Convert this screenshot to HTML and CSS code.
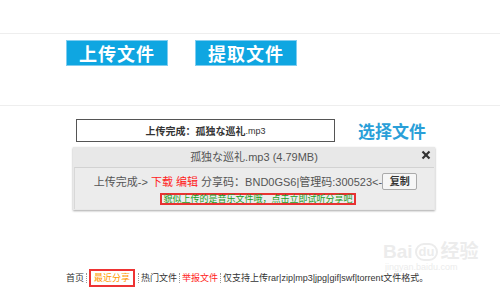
FILE: index.html
```html
<!DOCTYPE html>
<html lang="zh-CN">
<head>
    <meta charset="UTF-8">
    <title>文件分享</title>
    <link rel="stylesheet" href="styles.css">
</head>
<body>
<div class="topbar"></div>
<div class="nav">
    <a class="navbtn" href="#">上传文件</a>
    <a class="navbtn" href="#">提取文件</a>
</div>
<div class="upload_row">
    <div class="filebox">上传完成：孤独な巡礼<span class="ext">.mp3</span></div>
    <a class="choose" href="#">选择文件</a>
</div>
<div class="dialog">
    <div class="dialog_title">
        孤独な巡礼.mp3 (4.79MB)
        <svg class="close" viewBox="0 0 10 10">
            <path d="M1.5,1.5L8.5,8.5"></path>
            <path d="M8.5,1.5L1.5,8.5"></path>
        </svg>
    </div>
    <div class="dialog_body">
        <div class="result">
            上传完成-&gt;&nbsp;<span class="red">下载</span>&nbsp;<span class="red">编辑</span>&nbsp;分享码：BND0GS6|管理码:300523&lt;-<button class="copy">复制</button>
        </div>
        <div class="tip">貌似上传的是音乐文件哦，点击立即试听分享吧</div>
    </div>
</div>
<div class="footer">
    <a href="#">首页</a>
    <span class="sep"></span>
    <a class="recent" href="#">最近分享</a>
    <span class="sep"></span>
    <a href="#">热门文件</a>
    <span class="sep"></span>
    <a class="report" href="#">举报文件</a>
    <span class="sep"></span>
    <span>仅支持上传rar|zip|mp3|jpg|gif|swf|torrent文件格式。</span>
</div>
<div class="watermark">
    <div class="wm_logo">Bai<span class="wm_paw">du</span>经验</div>
    <div class="wm_url">jingyan.baidu.com</div>
</div>
</body>
</html>
```
FILE: styles.css
```css
body{
    margin: 0;
    background: #fff;
    font-family: "Liberation Sans", "Noto Sans CJK SC", sans-serif;
    color: #333;
    position: relative;
    height: 287px;
    overflow: hidden;
}
a{
    text-decoration: none;
    color: inherit;
}
.topbar{
    height: 33px;
    border-bottom: 1px solid #eee;
}
.nav{
    display: flex;
    gap: 27px;
    box-sizing: border-box;
    height: 72px;
    padding: 6px 0 0 66px;
    border-bottom: 1px solid #eee;
}
.navbtn{
    display: flex;
    justify-content: center;
    align-items: center;
    width: 102px;
    height: 26px;
    box-sizing: border-box;
    background: #0fa6e1;
    border: 1px solid #7fcdf0;
    color: #fff;
    font-weight: bold;
    font-size: 18px;
    letter-spacing: 1px;
}
.upload_row{
    display: flex;
    align-items: center;
    gap: 23px;
    padding: 12px 0 0 76px;
}
.filebox{
    width: 259px;
    height: 23px;
    box-sizing: border-box;
    border: 1px solid #555;
    display: flex;
    justify-content: center;
    align-items: center;
    font-size: 10px;
    font-weight: bold;
    color: #333;
}
.filebox .ext{
    font-weight: normal;
    font-size: 9px;
}
.choose{
    color: #2a9fd8;
    font-weight: bold;
    font-size: 17px;
}
.dialog{
    width: 362px;
    height: 63px;
    margin: 4px 0 0 73px;
    background: #e8e8e8;
    box-shadow: 0 1px 2px rgba(0,0,0,.35);
    display: flex;
    flex-direction: column;
}
.dialog_title{
    position: relative;
    height: 20px;
    line-height: 20px;
    text-align: center;
    font-size: 11px;
    color: #555;
}
.close{
    position: absolute;
    right: 4px;
    top: 3px;
    width: 10px;
    height: 10px;
    stroke: #333;
    stroke-width: 2.2;
}
.dialog_body{
    flex: 1;
    margin: 0 1px 1px 1px;
    border-top: 1px solid #d2d2d2;
    border-left: 1px solid #d8d8d8;
    background: #ececec;
    display: flex;
    flex-direction: column;
    align-items: center;
    padding-top: 4px;
}
.result{
    display: flex;
    align-items: center;
    font-size: 11px;
    color: #555;
    height: 18px;
    margin-left: 2px;
}
.red{
    color: #f22;
}
.copy{
    all: unset;
    width: 35px;
    height: 17px;
    box-sizing: border-box;
    border: 1px solid #aaa;
    border-radius: 2px;
    background: #f6f6f6;
    font-size: 10px;
    font-weight: bold;
    color: #333;
    text-align: center;
    line-height: 15px;
}
.tip{
    margin: 3px 0 0 7px;
    border: 2px solid #e83232;
    padding: 0 1px;
    height: 12px;
    font-size: 9px;
    line-height: 8px;
    color: #1a9c1a;
    box-sizing: border-box;
    display: flex;
    align-items: center;
}
.footer{
    display: flex;
    align-items: center;
    height: 19px;
    margin-top: 58px;
    padding-left: 66px;
    border-bottom: 1px solid #eee;
    font-size: 9px;
    color: #333;
}
.sep{
    display: inline-block;
    height: 10px;
    border-left: 1px dotted #999;
    margin: 0 2px;
}
.recent{
    color: #f90;
    border: 2px solid #ee3333;
    padding: 0 3px;
    height: 18px;
    line-height: 18px;
    box-sizing: border-box;
    margin: 0 1px 0 0;
    display: flex;
    align-items: center;
}
.report{
    color: #f22;
}
.watermark{
    position: absolute;
    left: 383px;
    top: 242px;
    color: #ececec;
}
.wm_logo{
    display: flex;
    align-items: center;
    font-size: 19px;
    font-weight: bold;
    line-height: 20px;
}
.wm_paw{
    font-size: 13px;
    border: 2px solid #ececec;
    border-radius: 9px;
    padding: 0 2px;
    margin: 0 2px;
    line-height: 14px;
}
.wm_url{
    font-size: 9px;
    line-height: 10px;
    margin-left: 2px;
}
```
